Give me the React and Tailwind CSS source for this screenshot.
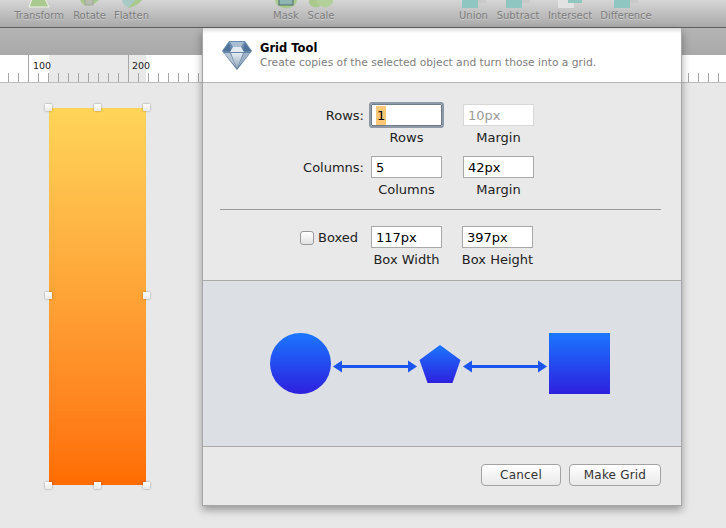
// App.jsx
import React from 'react';

const font = { fontFamily: '"DejaVu Sans", sans-serif' };

// Toolbar icons, cut off by the top of the window
const TransformIcon = () => (
    <svg width="24" height="8" viewBox="0 0 24 8">
        <path d="M5 -1 H18 L22 7 H2 Z" fill="#a9c98f" stroke="#eef2e6" strokeWidth="1" />
    </svg>
);
const RotateIcon = () => (
    <svg width="24" height="8" viewBox="0 0 24 8">
        <path d="M2 0 C4 6 12 9 21 0 Z" fill="#a9c98f" />
        <rect x="7" y="-1" width="8" height="6" fill="#b9bdb1" stroke="#8c9884" strokeWidth="0.6" />
    </svg>
);
const FlattenIcon = () => (
    <svg width="24" height="8" viewBox="0 0 24 8">
        <path d="M2 0 C3 5 6 7 9 8 L21 0 Z" fill="#a8c9c6" />
        <path d="M8 8 C14 7 19 4 22 0 H15 C13 3 10 6 8 8 Z" fill="#a9c98f" />
    </svg>
);
const MaskIcon = () => (
    <svg width="24" height="9" viewBox="0 0 24 9">
        <ellipse cx="12" cy="0" rx="11" ry="8.5" fill="#a9c98f" />
        <rect x="5" y="-1" width="14" height="6" fill="#8fb5b3" stroke="#4f6b70" strokeWidth="1" />
    </svg>
);
const ScaleIcon = () => (
    <svg width="24" height="9" viewBox="0 0 24 9">
        <circle cx="7" cy="0" r="7.5" fill="#a9c98f" />
        <circle cx="16" cy="-1" r="8.5" fill="#b3d09b" />
    </svg>
);
const BoolIcon = ({ light }) => (
    <svg width="32" height="8" viewBox="0 0 32 8">
        <rect x="16" y="0" width="12" height="3" fill={light ? '#8fc6bd' : '#c9c9c9'} />
        <rect x="4" y="0" width="16" height="8" fill={light ? '#e2e2e2' : '#8fc6c1'} />
        {light && <rect x="14" y="0" width="6" height="3" fill="#8fc6bd" />}
    </svg>
);

const ToolbarItem = ({ label, width, icon }) => (
    <div className={`flex flex-col items-center ${width}`}>
        <div className="h-2 flex items-start justify-center">{icon}</div>
        <span className="mt-[2px] text-[10px] leading-[12px] text-[#7d7d7d] whitespace-nowrap [text-shadow:0_1px_0_#cfcfcf]">{label}</span>
    </div>
);

const Toolbar = () => (
    <div className="h-[28px] flex bg-gradient-to-b from-[#d6d6d6] to-[#a9a9a9] border-b border-[#5f5f5f]">
        <div className="flex pl-[14px] gap-[9px] w-[273px]">
            <ToolbarItem label="Transform" width="w-[50px]" icon={<TransformIcon />} />
            <ToolbarItem label="Rotate" width="w-[33px]" icon={<RotateIcon />} />
            <ToolbarItem label="Flatten" width="w-[33px]" icon={<FlattenIcon />} />
        </div>
        <div className="flex gap-[9px] w-[186px]">
            <ToolbarItem label="Mask" width="w-[26px]" icon={<MaskIcon />} />
            <ToolbarItem label="Scale" width="w-[26px]" icon={<ScaleIcon />} />
        </div>
        <div className="flex gap-[9px]">
            <ToolbarItem label="Union" width="w-[29px]" icon={<BoolIcon />} />
            <ToolbarItem label="Subtract" width="w-[42px]" icon={<BoolIcon />} />
            <ToolbarItem label="Intersect" width="w-[44px]" icon={<BoolIcon light />} />
            <ToolbarItem label="Difference" width="w-[50px]" icon={<BoolIcon />} />
        </div>
    </div>
);

const Ruler = () => {
    const ticks = [];
    for (let x = 8; x < 726; x += 10) ticks.push(x);
    return (
        <svg width="726" height="28" viewBox="0 0 726 28" className="block">
            <rect x="0" y="0" width="726" height="28" fill="#ffffff" />
            <rect x="49" y="0" width="97" height="27" fill="#e9e9e9" />
            {ticks.map((x) => {
                const major = (x - 28) % 100 === 0;
                return <line key={x} x1={x + 0.5} x2={x + 0.5} y1={major ? 0 : 18} y2="27" stroke="#a6a6a6" />;
            })}
            <line x1="0" x2="726" y1="27.5" y2="27.5" stroke="#bdbdbd" />
            <text x="33" y="13.5" fontSize="9.5" fill="#222">100</text>
            <text x="132" y="13.5" fontSize="9.5" fill="#222">200</text>
        </svg>
    );
};

const Handle = ({ className }) => (
    <div className={`absolute w-[7px] h-[7px] bg-gradient-to-b from-white to-[#e8e8e8] shadow-[0_0_2px_rgba(0,0,0,0.45)] ${className}`} />
);

const GradientBar = () => (
    <div className="relative w-[97px] h-[377px] bg-gradient-to-b from-[#ffd558] to-[#ff6c00]">
        <Handle className="-left-[4px] -top-[4px]" />
        <Handle className="left-[45px] -top-[4px]" />
        <Handle className="-right-[4px] -top-[4px]" />
        <Handle className="-left-[4px] top-[184px]" />
        <Handle className="-right-[4px] top-[184px]" />
        <Handle className="-left-[4px] -bottom-[4px]" />
        <Handle className="left-[45px] -bottom-[4px]" />
        <Handle className="-right-[4px] -bottom-[4px]" />
    </div>
);

const Diamond = () => (
    <svg width="32" height="30" viewBox="0 0 32 30" className="shrink-0">
        <defs>
            <linearGradient id="gem" x1="0" y1="0" x2="0" y2="1">
                <stop offset="0" stopColor="#6d8fb3" />
                <stop offset="1" stopColor="#5a7694" />
            </linearGradient>
            <linearGradient id="gemLow" x1="0" y1="0" x2="0" y2="1">
                <stop offset="0" stopColor="#e6ecf2" />
                <stop offset="1" stopColor="#8ea4ba" />
            </linearGradient>
        </defs>
        <path d="M8 1 H24 L31 11 L16 30 L1 11 Z" fill="url(#gem)" />
        <path d="M9 2 H23 L20 7 H12 Z" fill="#a9bed3" />
        <path d="M12 7 H20 L23 12 H9 Z" fill="#e4eaf1" />
        <path d="M2 11 L8 3 L10 11 Z" fill="#4f739b" />
        <path d="M30 11 L24 3 L22 11 Z" fill="#4f739b" />
        <path d="M10 13 H22 L16 29 Z" fill="url(#gemLow)" />
        <path d="M3 13 H9 L15 27 Z" fill="#b7c6d6" />
        <path d="M29 13 H23 L17 27 Z" fill="#9fb3c8" />
    </svg>
);

const Field = ({ value, muted, focused, selected }) => (
    <div
        className={`w-[71px] h-[22px] flex items-center pl-[4px] pt-[1px] bg-white text-[13px] border ${
            focused
                ? 'border-[#6f7c8a] outline outline-2 outline-[#8d99a6] rounded-[1px]'
                : muted
                ? 'border-[#d8d8d8] text-[#9a9a9a]'
                : 'border-[#a9a9a9] text-black'
        }`}
    >
        {selected ? <span className="bg-[#fbc877] px-[1px] leading-[19px]">{value}</span> : value}
    </div>
);

const FormRow = ({ label, first, second, firstCaption, secondCaption, gap = 'ml-[21px]' }) => (
    <div className="flex">
        <div className="w-[168px] h-[22px] flex items-center justify-end pr-[7px] pt-[1px] text-[13px] text-[#222]">{label}</div>
        <div className="flex flex-col items-center w-[71px]">
            {first}
            <span className="mt-[4px] text-[13px] leading-[16px] text-[#222] whitespace-nowrap">{firstCaption}</span>
        </div>
        <div className={`flex flex-col items-center w-[71px] ${gap}`}>
            {second}
            <span className="mt-[4px] text-[13px] leading-[16px] text-[#222] whitespace-nowrap">{secondCaption}</span>
        </div>
    </div>
);

const Preview = () => (
    <div className="h-[167px] shrink-0 bg-[#dcdfe4] border-y border-[#aaaaaa] pt-[52px] pl-[67px]">
        <svg width="342" height="62" viewBox="0 0 342 62" className="block">
            <defs>
                <linearGradient id="blue" x1="0" y1="0" x2="0" y2="1">
                    <stop offset="0" stopColor="#1a76ff" />
                    <stop offset="1" stopColor="#2e20de" />
                </linearGradient>
            </defs>
            <circle cx="30.5" cy="30.5" r="30.5" fill="url(#blue)" />
            <path d="M170 12 L190.5 27 L182.5 50 L157.5 50 L149.5 27 Z" fill="url(#blue)" />
            <rect x="279" y="0" width="61" height="61" fill="url(#blue)" />
            <g fill="#1a55f0" stroke="none">
                <rect x="68" y="32" width="72" height="3" />
                <path d="M63 33.5 L72 27.5 V39.5 Z" />
                <path d="M147 33.5 L138 27.5 V39.5 Z" />
                <rect x="198" y="32" width="72" height="3" />
                <path d="M193 33.5 L202 27.5 V39.5 Z" />
                <path d="M277 33.5 L268 27.5 V39.5 Z" />
            </g>
        </svg>
    </div>
);

const DialogButton = ({ label, width }) => (
    <button className={`${width} h-[22px] rounded-[4px] border border-[#a3a3a3] bg-gradient-to-b from-white to-[#e9e9e9] text-[12px] text-[#333] tracking-[0.2px]`}>
        {label}
    </button>
);

const GridDialog = () => (
    <div className="absolute left-[202px] top-[28px] w-[480px] h-[478px] flex flex-col bg-[#e9e9e9] border-x border-b border-[#a6a6a6] shadow-[0_4px_8px_rgba(0,0,0,0.35)]">
        <div className="h-[55px] shrink-0 flex items-center bg-white border-b border-[#b5b5b5] pl-[18px] gap-[7px] shadow-[inset_0_5px_4px_-3px_rgba(0,0,0,0.18)]">
            <Diamond />
            <div className="flex flex-col pt-[1px]">
                <span className="text-[11.5px] leading-[15px] font-bold text-black">Grid Tool</span>
                <span className="text-[10.7px] leading-[14px] text-[#7e7e7e] whitespace-nowrap">Create copies of the selected object and turn those into a grid.</span>
            </div>
        </div>

        <div className="h-[197px] shrink-0 pt-[21px] flex flex-col">
            <FormRow
                label="Rows:"
                first={<Field value="1" focused selected />}
                firstCaption="Rows"
                second={<Field value="10px" muted />}
                secondCaption="Margin"
            />
            <div className="mt-[10px]">
                <FormRow
                    label="Columns:"
                    first={<Field value="5" />}
                    firstCaption="Columns"
                    second={<Field value="42px" />}
                    secondCaption="Margin"
                />
            </div>
            <div className="mt-[11px] ml-[17px] mr-[20px] h-px bg-[#9a9a9a]" />
            <div className="mt-[16px]">
                <FormRow
                    label={
                        <span className="flex items-center gap-[4px] pr-[6px]">
                            <span className="w-[14px] h-[14px] rounded-[3px] border border-[#9a9a9a] bg-gradient-to-b from-white to-[#e2e2e2]" />
                            Boxed
                        </span>
                    }
                    first={<Field value="117px" />}
                    firstCaption="Box Width"
                    second={<Field value="397px" />}
                    secondCaption="Box Height"
                    gap="ml-[20px]"
                />
            </div>
        </div>

        <Preview />

        <div className="flex-1 flex justify-end items-start pt-[17px] pr-[20px] gap-[8px]">
            <DialogButton label="Cancel" width="w-[80px]" />
            <DialogButton label="Make Grid" width="w-[92px]" />
        </div>
    </div>
);

const App = () => (
    <div className="relative w-[726px] h-[528px] overflow-hidden bg-[#e8e8e8]" style={font}>
        <Toolbar />
        <div className="h-[27px] bg-gradient-to-b from-[#b4b4b4] to-[#a9a9a9]" />
        <Ruler />
        <div className="pl-[49px] pt-[25px]">
            <GradientBar />
        </div>
        <GridDialog />
    </div>
);

export default App;
